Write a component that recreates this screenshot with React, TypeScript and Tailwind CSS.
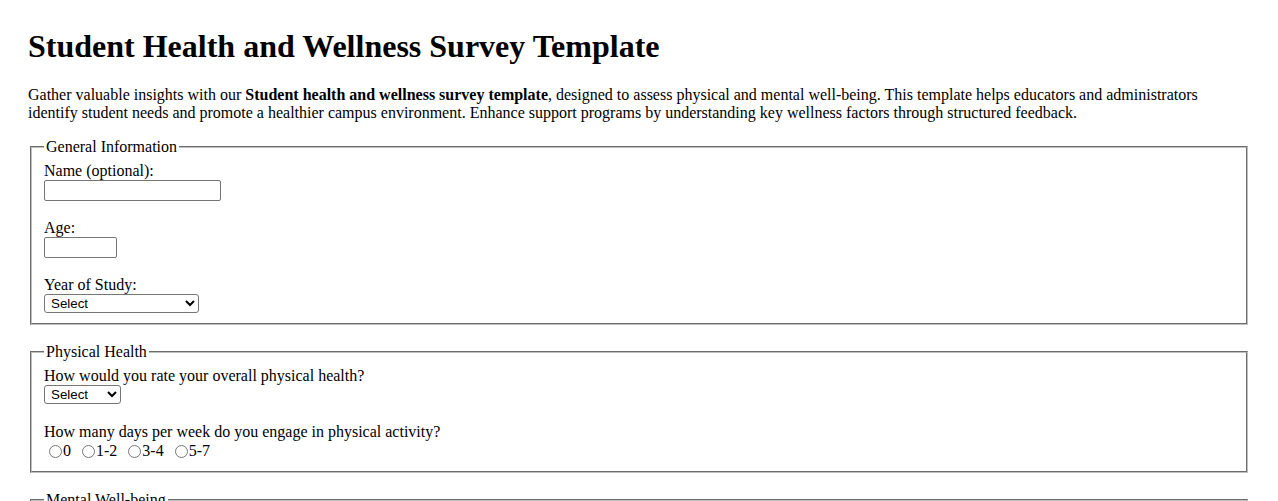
import { useState } from "react";

const serif = "font-['Liberation_Serif','Times_New_Roman',serif]";
const sans = "font-['Liberation_Sans',Arial,sans-serif]";

const fieldsetCls =
  "mx-[2px] mb-[18px] border-2 [border-style:groove] border-[#c0c0c0] px-3 pt-[6px] pb-[10px] min-w-0";
const legendCls = "px-[2px] leading-[18px]";
const labelCls = "block leading-[18px]";
const textInputCls = `block h-[21px] border border-[#767676] rounded-[2px] px-[2px] text-[13.33px] ${sans} bg-white`;
const selectCls = `block h-[19px] border border-[#767676] rounded-[3px] pl-[2px] text-[13.33px] ${sans} bg-white text-black`;
const radioCls = "ml-[5px] mr-[1px] w-[13px] h-[13px] align-[-2px]";

const RadioRow = ({ name, options }: { name: string; options: string[] }) => {
  const [picked, setPicked] = useState<string | null>(null);
  return (
    <div className="leading-[20px]">
      {options.map((opt) => (
        <span key={opt}>
          <label className="mr-[2px]">
            <input
              type="radio"
              name={name}
              className={radioCls}
              checked={picked === opt}
              onChange={() => setPicked(opt)}
            />
            {opt}
          </label>{" "}
        </span>
      ))}
    </div>
  );
};

const App = () => {
  const [name, setName] = useState("");
  const [age, setAge] = useState("");

  return (
    <div className={`bg-white text-black min-h-screen px-[28px] pt-[28px] pb-8 text-[16px] ${serif}`}>
      <h1 className="text-[32px] font-bold leading-[37px] mb-[21px]">
        Student Health and Wellness Survey Template
      </h1>
      <p className="leading-[18px] mb-4">
        Gather valuable insights with our <strong>Student health and wellness survey template</strong>,
        designed to assess physical and mental well-being. This template helps educators and administrators
        identify student needs and promote a healthier campus environment. Enhance support programs by
        understanding key wellness factors through structured feedback.
      </p>

      <form>
        <fieldset className={fieldsetCls}>
          <legend className={legendCls}>General Information</legend>
          <div className="mb-[18px]">
            <label className={labelCls} htmlFor="name">Name (optional):</label>
            <input
              id="name"
              type="text"
              value={name}
              onChange={(e) => setName(e.target.value)}
              className={`${textInputCls} w-[177px]`}
            />
          </div>
          <div className="mb-[18px]">
            <label className={labelCls} htmlFor="age">Age:</label>
            <input
              id="age"
              type="text"
              value={age}
              onChange={(e) => setAge(e.target.value)}
              className={`${textInputCls} w-[73px]`}
            />
          </div>
          <div>
            <label className={labelCls} htmlFor="year">Year of Study:</label>
            <select id="year" className={`${selectCls} w-[155px]`} defaultValue="">
              <option value="">Select</option>
              <option>Freshman</option>
              <option>Sophomore</option>
              <option>Junior</option>
              <option>Senior</option>
              <option>Graduate Student</option>
            </select>
          </div>
        </fieldset>

        <fieldset className={fieldsetCls}>
          <legend className={legendCls}>Physical Health</legend>
          <div className="mb-[19px]">
            <label className={labelCls} htmlFor="health">How would you rate your overall physical health?</label>
            <select id="health" className={`${selectCls} w-[77px]`} defaultValue="">
              <option value="">Select</option>
              <option>Excellent</option>
              <option>Good</option>
              <option>Fair</option>
              <option>Poor</option>
            </select>
          </div>
          <div>
            <span className={labelCls}>How many days per week do you engage in physical activity?</span>
            <RadioRow name="activity" options={["0", "1-2", "3-4", "5-7"]} />
          </div>
        </fieldset>

        <fieldset className={fieldsetCls}>
          <legend className={legendCls}>Mental Well-being</legend>
          <div className="mb-[18px]">
            <label className={labelCls} htmlFor="stress">How often do you feel stressed?</label>
            <select id="stress" className={`${selectCls} w-[92px]`} defaultValue="">
              <option value="">Select</option>
              <option>Never</option>
              <option>Rarely</option>
              <option>Sometimes</option>
              <option>Often</option>
              <option>Always</option>
            </select>
          </div>
          <div>
            <span className={labelCls}>Do you have access to mental health resources on campus?</span>
            <RadioRow name="resources" options={["Yes", "No", "Not sure"]} />
          </div>
        </fieldset>
      </form>
    </div>
  );
};

export default App;
